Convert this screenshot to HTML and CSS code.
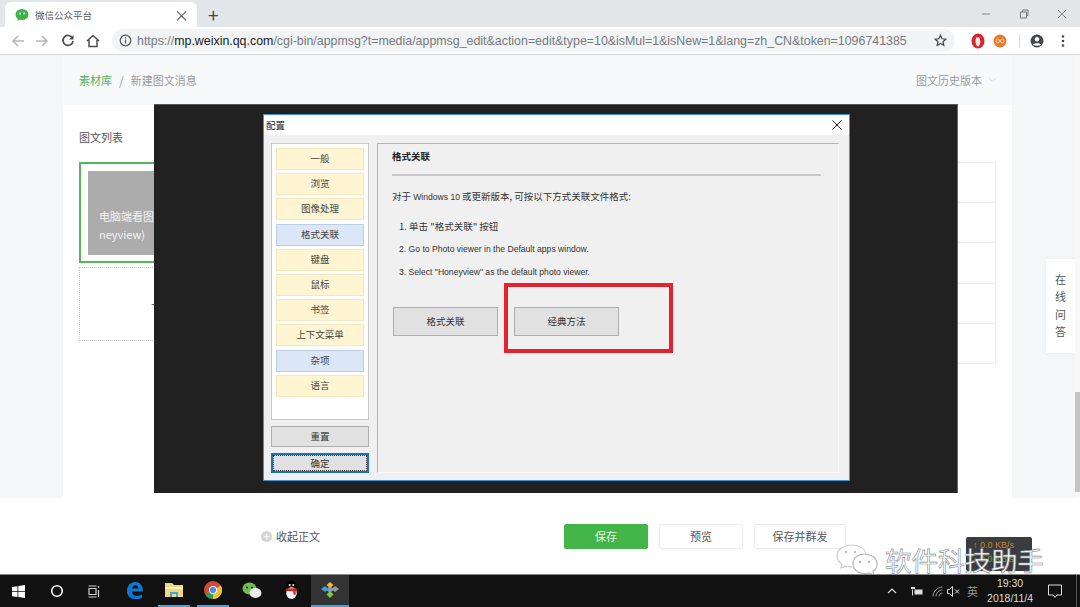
FILE: index.html
```html
<!DOCTYPE html>
<html>
  <head>
    <meta charset="UTF-8">
    <title>微信公众平台</title>
    <link rel="stylesheet" href="styles.css">
  </head>
  <body>
    <div class="tabstrip">
      <div class="tab">
        <svg class="tab-icon" width="14" height="14" viewBox="0 0 14 14"><ellipse cx="7" cy="6.500" rx="6.500" ry="5.600" fill="#3fb24a"/><path d="M3 10l-.5 3 3-2z" fill="#3fb24a"/><circle cx="5" cy="5.500" r="1" fill="#fff"/><circle cx="9" cy="5.500" r="1" fill="#fff"/></svg>
        <span class="tab-title">微信公众平台</span>
        <span class="tab-close">×</span>
      </div>
      <span class="tab-new">+</span>
      <div class="win-btns">
        <svg width="10" height="10" viewBox="0 0 10 10"><path d="M1 5h8" stroke="#888" fill="none"/></svg>
        <svg width="10" height="10" viewBox="0 0 10 10"><path d="M1.500 3h6v6h-6zM3.500 3V1h5.500v5.500H7.500" stroke="#777" fill="none"/></svg>
        <svg width="10" height="10" viewBox="0 0 10 10"><path d="M1 1l8 8M9 1l-8 8" stroke="#888" fill="none"/></svg>
      </div>
    </div>
    <div class="toolbar">
      <svg class="nav nav-back" width="14" height="14" viewBox="0 0 14 14"><path d="M13 7H2M7 2L2 7l5 5" stroke="#b4b7ba" stroke-width="1.500" fill="none"/></svg>
      <svg class="nav nav-forward" width="14" height="14" viewBox="0 0 14 14"><path d="M1 7h11M7 2l5 5-5 5" stroke="#b4b7ba" stroke-width="1.500" fill="none"/></svg>
      <svg class="nav nav-reload" width="14" height="14" viewBox="0 0 14 14"><path d="M11.500 4.200A5 5 0 1 0 12 7" stroke="#4a4d50" stroke-width="1.700" fill="none"/><path d="M12.500 1v4.500H8z" fill="#4a4d50"/></svg>
      <svg class="nav nav-home" width="14" height="14" viewBox="0 0 14 14"><path d="M1 7l6-5.500L13 7M3 6v6.500h8V6" stroke="#4a4d50" stroke-width="1.500" fill="none"/></svg>
      <div class="omnibox">
        <svg width="13" height="13" viewBox="0 0 13 13"><circle cx="6.500" cy="6.500" r="5.300" stroke="#555" stroke-width="1.200" fill="none"/><path d="M6.500 5.500v4M6.500 3.200v1.200" stroke="#555" stroke-width="1.200"/></svg>
        <span class="url"><span class="url-dim">https://</span>mp.weixin.qq.com<span class="url-dim">/cgi-bin/appmsg?t=media/appmsg_edit&amp;action=edit&amp;type=10&amp;isMul=1&amp;isNew=1&amp;lang=zh_CN&amp;token=1096741385</span></span>
        <svg class="star" width="13" height="13" viewBox="0 0 13 13"><path d="M6.500 1.300l1.600 3.500 3.700.4-2.800 2.500.8 3.700-3.300-1.900-3.300 1.900.8-3.700L1.200 5.200l3.700-.4z" stroke="#444" stroke-width="1.200" fill="none"/></svg>
      </div>
      <div class="ext">
        <svg width="14" height="16" viewBox="0 0 14 16"><ellipse cx="7" cy="8" rx="6.500" ry="7.500" fill="#d8262c"/><path d="M4.500 8c0-2 .8-4 1.500-4s.6 1 .8 1 .3-1 1-1 .6 1 .8 1.500.7 1.500.7 3.500-1 4.500-2.300 4.500S4.500 10.500 4.500 8z" fill="#fbeaea"/></svg>
        <svg class="ext-orange" width="14" height="14" viewBox="0 0 14 14"><circle cx="7" cy="7" r="6.500" fill="#f0782a"/><circle cx="4.800" cy="7" r="1.800" fill="none" stroke="#ffd9a8"/><circle cx="9.200" cy="7" r="1.800" fill="none" stroke="#ffd9a8"/></svg>
        <span class="ext-sep"></span>
        <svg class="ext-user" width="14" height="14" viewBox="0 0 14 14"><circle cx="7" cy="7" r="6.500" fill="#46494c"/><circle cx="7" cy="5.300" r="2.200" fill="#fff"/><path d="M2.800 10.800c1-2 7.400-2 8.400 0-1.200 1.200-7.200 1.200-8.400 0z" fill="#fff"/></svg>
        <svg class="ext-more" width="4" height="14" viewBox="0 0 4 14"><circle cx="2" cy="2.500" r="1.300" fill="#46494c"/><circle cx="2" cy="7" r="1.300" fill="#46494c"/><circle cx="2" cy="11.500" r="1.300" fill="#46494c"/></svg>
      </div>
    </div>

    <div class="page">
      <div class="column">
        <div class="crumbs">
          <span class="crumb-link">素材库</span><span class="crumb-sep">/</span><span class="crumb-now">新建图文消息</span>
          <span class="history">图文历史版本
            <svg width="9" height="6" viewBox="0 0 9 6"><path d="M.5 .5l4 4 4-4" stroke="#dfe1e3" fill="none"/></svg>
          </span>
        </div>
        <div class="editor">
          <div class="side">
            <div class="side-title">图文列表</div>
            <div class="article">
              <div class="cover">电脑端看图<br>neyview)</div>
            </div>
            <div class="add-article">+</div>
          </div>
          <div class="form-rows">
            <div class="form-row"></div>
            <div class="form-row"></div>
            <div class="form-row"></div>
            <div class="form-row"></div>
            <div class="form-row"></div>
          </div>
        </div>
      </div>
      <div class="help">在<br>线<br>问<br>答</div>
      <div class="scrollbar"><div class="thumb"></div></div>

      <div class="action-bar">
        <span class="collapse"><span class="collapse-icon">+</span>收起正文</span>
        <span class="btn btn-green">保存</span>
        <span class="btn btn-preview">预览</span>
        <span class="btn btn-send">保存并群发</span>
      </div>

      <div class="speed">↑ 0.0 KB/s<br><span class="speed-down">↓ 0.0 KB/s</span></div>
      <div class="watermark">
        <svg width="44" height="34" viewBox="0 0 44 34"><path d="M17 2C8 2 2 7 2 13c0 3 2 6 5 8l-1 4 5-2c2 .6 4 1 6 .8M17 2c8 0 13 4 14 9" stroke="#c9cdd0" fill="#fff" stroke-width="1.200"/><path d="M29 11c7 0 13 4 13 10 0 3-2 6-4 7l1 4-5-2c-8 2-16-2-16-9 0-6 5-10 11-10z" stroke="#b5b9bc" fill="#fff" stroke-width="1.200"/><circle cx="11" cy="9" r="1" fill="#aaa"/><circle cx="20" cy="9" r="1" fill="#aaa"/><circle cx="25" cy="19" r="1" fill="#999"/><circle cx="34" cy="19" r="1" fill="#999"/></svg>
        <span class="wm-text">软件科技助手</span>
      </div>

      <div class="shot">
        <div class="dialog">
          <div class="dlg-title">
            <span>配置</span>
            <svg width="10" height="10" viewBox="0 0 10 10"><path d="M.5 .5l9 9M9.500 .5l-9 9" stroke="#222" fill="none"/></svg>
          </div>
          <div class="dlg-body">
            <div class="dlg-left">
              <div class="menu">
                <div class="menu-item">一般</div>
                <div class="menu-item">浏览</div>
                <div class="menu-item">图像处理</div>
                <div class="menu-item menu-blue">格式关联</div>
                <div class="menu-item">键盘</div>
                <div class="menu-item">鼠标</div>
                <div class="menu-item">书签</div>
                <div class="menu-item">上下文菜单</div>
                <div class="menu-item menu-blue">杂项</div>
                <div class="menu-item">语言</div>
              </div>
              <div class="dlg-btn side-btn">重置</div>
              <div class="dlg-btn side-btn ok-btn">确定</div>
            </div>
            <div class="panel">
              <div class="panel-title">格式关联</div>
              <div class="panel-rule"></div>
              <p class="panel-intro">对于 <span class="latin">Windows 10</span> 或更新版本, 可按以下方式关联文件格式:</p>
              <p class="step">1. 单击 "格式关联" 按钮</p>
              <p class="step latin">2. Go to Photo viewer in the Default apps window.</p>
              <p class="step latin">3. Select "Honeyview" as the default photo viewer.</p>
              <div class="panel-btns">
                <div class="dlg-btn wide-btn">格式关联</div>
                <div class="dlg-btn wide-btn">经典方法</div>
              </div>
            </div>
          </div>
        </div>
        <div class="red-box"></div>
      </div>
    </div>

    <div class="taskbar">
      <svg class="tb-win" width="13" height="13" viewBox="0 0 13 13"><path d="M0 2l5.500-.8v5H0zM6.300 1.100L13 0v6.200H6.300zM0 7h5.500v5L0 11.200zM6.300 7H13v6l-6.700-1z" fill="#fff"/></svg>
      <svg class="tb-cortana" width="14" height="14" viewBox="0 0 14 14"><circle cx="7" cy="7" r="5.300" stroke="#fff" stroke-width="1.600" fill="none"/></svg>
      <svg class="tb-tasks" width="14" height="13" viewBox="0 0 14 13"><path d="M.5 1h8M.5 12h8M1 3.500h7v6H1zM10.500 1v2M10.500 5v7" stroke="#cfcfcf" fill="none" stroke-width="1.200"/></svg>
      <span class="tb-app">
        <svg width="16" height="17" viewBox="0 0 16 17"><path d="M0 9C0 3.500 3.500 0 8 0s8 3.200 8 9.500H5c0 3 2 4.500 5 4.500 2 0 4-.6 5-1.400V16c-1.500.8-3.500 1.200-5.500 1.200C4 17.200 0 14.500 0 9zM5 6.500h6.300C11.300 4.500 10 3.300 8.300 3.300S5.400 4.500 5 6.500z" fill="#0a78d4"/></svg>
      </span>
      <span class="tb-app tb-on">
        <svg width="18" height="16" viewBox="0 0 18 16"><path d="M0 1h7l2 2h9v12H0z" fill="#f6d67a"/><path d="M0 5h18v2H0z" fill="#fff3c4"/><path d="M5 15v-5h8v5h-2v-3H7v3z" fill="#39a9dc"/></svg>
      </span>
      <span class="tb-app tb-on">
        <svg width="18" height="18" viewBox="0 0 18 18"><circle cx="9" cy="9" r="9" fill="#d9463a"/><path d="M9 9L1.200 13.500A9 9 0 0 0 9 18z" fill="#3a9b4a"/><path d="M9 9l7.800-4.500A9 9 0 0 1 9 18z" fill="#f2c230"/><circle cx="9" cy="9" r="4" fill="#fff"/><circle cx="9" cy="9" r="3.100" fill="#4a8bf0"/></svg>
      </span>
      <span class="tb-app">
        <svg width="20" height="17" viewBox="0 0 20 17"><ellipse cx="7.500" cy="6.500" rx="7" ry="6" fill="#6cc04a"/><ellipse cx="13.500" cy="11" rx="6" ry="5" fill="#eee"/><circle cx="5" cy="5.500" r="1" fill="#1a1a1a"/><circle cx="10" cy="5.500" r="1" fill="#1a1a1a"/></svg>
      </span>
      <span class="tb-app">
        <svg width="15" height="20" viewBox="0 0 14 19"><ellipse cx="7" cy="8" rx="5" ry="7.500" fill="#000"/><ellipse cx="7" cy="12.500" rx="5" ry="5.500" fill="#f4f4f4"/><path d="M2 8h10v2.500H2z" fill="#d6231e"/><path d="M8.500 10h2.500v4H9z" fill="#d6231e"/><circle cx="5.300" cy="4.800" r="1" fill="#eee"/><circle cx="8.700" cy="4.800" r="1" fill="#eee"/><path d="M5.500 6.500h3l-1.500 1.500z" fill="#f0a020"/></svg>
      </span>
      <span class="tb-app tb-active">
        <svg width="20" height="17" viewBox="0 0 20 17"><path d="M10 4l4 3.500L10 11 6 7.500z" fill="#7fa0b0"/><path d="M10 0l3.500 3-3.500 3-3.500-3z" fill="#f0b83c"/><path d="M5 4l3.500 3L5 10 1 7z" fill="#3f9be0"/><path d="M15 4l4 3-4 3-3.500-3z" fill="#9a9a9a"/><path d="M10 9l3.500 3.500L10 16l-3.500-3.500z" fill="#7ec94a"/></svg>
      </span>
      <div class="tray">
        <svg class="tray-up" width="10" height="6" viewBox="0 0 10 6"><path d="M1 5l4-4 4 4" stroke="#ddd" fill="none" stroke-width="1.200"/></svg>
        <svg class="tray-power" width="12" height="10" viewBox="0 0 12 10"><path d="M0 1h4v2H0zM1 3.500h1v6H1zM3.500 3.500h8v5h-8z" fill="#ddd"/></svg>
        <svg class="tray-wifi" width="11" height="11" viewBox="0 0 11 11"><path d="M1 10.500c0-5 4-9 9.500-9.500M4 10.500c0-3.500 3-6.500 6.500-6.500M7 10.500c0-2 1.500-3.500 3.500-3.500" stroke="#999" fill="none"/></svg>
        <svg class="tray-sound" width="13" height="11" viewBox="0 0 13 11"><path d="M.5 3.500h2l3-3v10l-3-3h-2zM8 3.500l4 4M12 3.500l-4 4" stroke="#ddd" fill="none"/></svg>
        <span class="tray-ime">英</span>
        <span class="clock">19:30<br>2018/11/4</span>
        <svg class="tray-note" width="14" height="14" viewBox="0 0 14 14"><path d="M.5 1h13v10H9l-2 2.500L5.500 11H.5z" stroke="#ddd" fill="none"/></svg>
        <span class="show-desktop"></span>
      </div>
    </div>
  </body>
</html>
```

FILE: styles.css
```css
* {
    box-sizing: border-box;
}
html, body {
    margin: 0;
    height: 607px;
    overflow: hidden;
}
body {
    font-family: "Noto Sans CJK SC", "Liberation Sans", sans-serif;
    font-size: 11px;
    display: flex;
    flex-direction: column;
    background: #f5f6f8;
    color: #333;
}
p {
    margin: 0;
}

/* browser chrome */
.tabstrip {
    height: 27px;
    background: #e3e6e9;
    display: flex;
    align-items: flex-end;
    padding-left: 5px;
}
.tab {
    width: 192px;
    height: 25px;
    background: #fff;
    border-radius: 6px 6px 0 0;
    display: flex;
    align-items: center;
    padding: 0 8px 0 10px;
}
.tab-title {
    margin-left: 6px;
    font-size: 9.500px;
    color: #5a5a5a;
    flex: 1;
}
.tab-close {
    font-size: 15px;
    color: #555;
}
.tab-new {
    font-size: 19px;
    line-height: 25px;
    margin-left: 11px;
    color: #444;
}
.win-btns {
    margin-left: auto;
    align-self: center;
    display: flex;
    gap: 28px;
    padding-right: 13px;
}
.toolbar {
    height: 28px;
    background: #fff;
    border-bottom: 1px solid #d3d5d7;
    display: flex;
    align-items: center;
    padding-left: 11px;
}
.nav-back {
    margin-right: 10px;
}
.nav-forward {
    margin-right: 12px;
}
.nav-reload {
    margin-right: 11px;
}
.omnibox {
    width: 843px;
    height: 23px;
    margin-left: 12px;
    background: #f1f3f4;
    border-radius: 12px;
    display: flex;
    align-items: center;
    padding: 0 8px 0 7px;
}
.url {
    margin-left: 5px;
    font-family: "Liberation Sans", sans-serif;
    font-size: 12.400px;
    color: #202124;
    white-space: nowrap;
    flex: 1;
}
.url-dim {
    color: #777b7f;
}
.ext {
    display: flex;
    align-items: center;
    margin-left: 16px;
}
.ext-orange {
    margin-left: 8px;
}
.ext-sep {
    width: 1px;
    height: 14px;
    margin-left: 12px;
    background: #dcdcdc;
}
.ext-user {
    margin-left: 10px;
}
.ext-more {
    margin-left: 17px;
}

/* page behind the screenshot */
.page {
    position: relative;
    flex: 1;
    background: #f5f6f8;
}
.column {
    position: absolute;
    left: 63px;
    top: 0;
    width: 949px;
    height: 100%;
    display: flex;
    flex-direction: column;
    background: #fff;
}
.crumbs {
    height: 50px;
    background: #f8f9fb;
    display: flex;
    align-items: center;
    padding: 0 15px 0 16px;
    font-size: 11px;
    color: #9b9b9b;
}
.crumb-link {
    color: #4db35a;
}
.crumb-sep {
    margin: 0 7px;
    font-size: 12px;
    color: #7fa98a;
}
.history {
    margin-left: auto;
    display: flex;
    align-items: center;
    gap: 6px;
}
.editor {
    flex: 1;
    display: flex;
    padding: 0 16px;
}
.side {
    width: 190px;
}
.side-title {
    margin-top: 23px;
    height: 18px;
    line-height: 18px;
    color: #555;
}
.article {
    height: 101px;
    margin-top: 16px;
    border: 2px solid #57b45f;
    padding: 7px;
}
.cover {
    height: 84px;
    background: #acacac;
    color: #f2f2f2;
    font-size: 11px;
    line-height: 18px;
    padding: 36px 0 0 11px;
}
.add-article {
    height: 74px;
    margin-top: 4px;
    border: 1px dotted #c8c8c8;
    padding: 25px 0 0 71px;
    font-size: 15px;
    color: #666;
}
.form-rows {
    margin: 57px 0 0 auto;
    width: 100px;
    height: 202px;
    border: 1px solid #eceded;
    display: flex;
    flex-direction: column;
}
.form-row {
    flex: 1;
    border-bottom: 1px solid #eceded;
}
.form-row:last-child {
    border-bottom: 0;
}
.help {
    position: absolute;
    left: 1046px;
    top: 204px;
    width: 29px;
    height: 94px;
    padding-top: 12px;
    background: #fff;
    box-shadow: 0 0 4px rgba(0,0,0,0.06);
    text-align: center;
    font-size: 11px;
    line-height: 17.300px;
    color: #555;
}
.scrollbar {
    position: absolute;
    right: 0;
    top: 0;
    width: 5px;
    height: 100%;
    background: #f8f8f8;
}
.thumb {
    height: 100px;
    margin-top: 337px;
    background: #c4c4c4;
}

/* save bar */
.action-bar {
    position: absolute;
    left: 0;
    right: 0;
    bottom: 0;
    height: 76px;
    background: #fff;
    display: flex;
    align-items: center;
    font-size: 11px;
    color: #555;
    padding: 0 0 0 261px;
}
.collapse {
    display: flex;
    align-items: center;
    gap: 4px;
    width: 303px;
}
.collapse-icon {
    width: 11px;
    height: 11px;
    border-radius: 50%;
    background: #d5d5d5;
    color: #fff;
    font-size: 11px;
    line-height: 10px;
    text-align: center;
}
.btn {
    height: 25px;
    line-height: 23px;
    text-align: center;
    border: 1px solid #ececec;
    border-radius: 2px;
}
.btn-green {
    width: 84px;
    background: #43b549;
    border-color: #43b549;
    color: #e8f6e9;
}
.btn-preview {
    width: 84px;
    margin-left: 11px;
}
.btn-send {
    width: 92px;
    margin-left: 11px;
}
.speed {
    position: absolute;
    left: 966px;
    top: 482px;
    width: 66px;
    height: 34px;
    background: #3a3c40;
    border-radius: 2px;
    font-family: "Liberation Sans", sans-serif;
    font-size: 9px;
    line-height: 14px;
    padding: 1px 0 0 7px;
    color: #c98a24;
}
.speed-down {
    color: #6d9c3a;
}
.watermark {
    position: absolute;
    left: 835px;
    top: 488px;
    display: flex;
    align-items: center;
    gap: 6px;
}
.wm-text {
    font-size: 26.500px;
    line-height: 34px;
    color: #fff;
    -webkit-text-stroke: .6px #8a8d90;
}

/* dialog screenshot pasted over the page */
.shot {
    position: absolute;
    left: 154px;
    top: 49px;
    width: 804px;
    height: 389px;
    background: #212121;
    border-top: 1px solid #555;
    border-right: 1px solid #666;
    padding: 9px 0 0 109px;
}
.dialog {
    width: 587px;
    height: 367px;
    background: #fff;
    border: 1px solid #3a93d4;
    display: flex;
    flex-direction: column;
}
.dlg-title {
    height: 20px;
    display: flex;
    align-items: center;
    justify-content: space-between;
    padding: 0 7px 0 2px;
    font-size: 9.500px;
    color: #222;
}
.dlg-body {
    flex: 1;
    background: #f0f0f0;
    display: flex;
    padding: 8px 10px 7px 7px;
}
.dlg-left {
    width: 98px;
    margin-right: 8px;
}
.menu {
    height: 277px;
    background: #fff;
    border: 1px solid #c8c8c8;
    padding: 4px 4px 0;
    margin-bottom: 6px;
    display: flex;
    flex-direction: column;
    gap: 3.200px;
}
.menu-item {
    height: 22px;
    background: #fff5d2;
    border: 1px solid #f4e7bd;
    text-align: center;
    line-height: 19px;
    font-size: 9.500px;
    color: #444;
}
.menu-blue {
    background: #dbe6f6;
    border-color: #bccde6;
}
.dlg-btn {
    background: #e1e1e1;
    border: 1px solid #adadad;
    text-align: center;
    font-size: 9.500px;
    color: #333;
}
.side-btn {
    height: 21px;
    line-height: 19px;
    margin-bottom: 6px;
}
.ok-btn {
    height: 20px;
    margin-bottom: 0;
    border: 2px solid #1c72b8;
    line-height: 16px;
    outline: 1px dotted #333;
    outline-offset: -3px;
}
.panel {
    flex: 1;
    background: #f0f0f0;
    border: 1px solid #f8f8f8;
    border-left-color: #b4b4b4;
    border-top-color: #b4b4b4;
    padding: 5px 0 0 14px;
    font-size: 9.500px;
    color: #333;
}
.panel-title {
    font-weight: 700;
    color: #222;
    line-height: 14px;
}
.panel-rule {
    width: 429px;
    height: 2px;
    margin: 11px 0 13px;
    background: #c8c8c8;
}
.panel-intro {
    line-height: 14px;
    margin-bottom: 15px;
}
.step {
    line-height: 14px;
    margin: 0 0 9px 7px;
}
.latin {
    font-family: "Liberation Sans", sans-serif;
    font-size: 8.600px;
}
.panel-btns {
    display: flex;
    gap: 16px;
    margin: 28px 0 0 1px;
}
.wide-btn {
    width: 105px;
    height: 29px;
    line-height: 27px;
}
.red-box {
    position: absolute;
    left: 350px;
    top: 178px;
    width: 169px;
    height: 70px;
    border: 4px solid #e5212f;
}

/* windows taskbar */
.taskbar {
    height: 33px;
    background: #111;
    border-top: 1px solid #888;
    display: flex;
    align-items: center;
    position: relative;
    z-index: 1;
}
.tb-win {
    margin-left: 12px;
}
.tb-cortana {
    margin-left: 25px;
}
.tb-tasks {
    margin-left: 24px;
}
.tb-app {
    width: 32px;
    height: 32px;
    margin-left: 7px;
    display: flex;
    align-items: center;
    justify-content: center;
    border-bottom: 2px solid transparent;
}
.tb-app:nth-of-type(1) {
    margin-left: 17px;
}
.tb-on {
    border-bottom-color: #4d9fd8;
}
.tb-active {
    width: 38px;
    margin-left: 4px;
    background: #333;
    border-bottom-color: #4d9fd8;
}
.tray {
    margin-left: auto;
    display: flex;
    align-items: center;
    height: 100%;
    color: #ddd;
}
.tray-power {
    margin-left: 14px;
}
.tray-wifi {
    margin-left: 9px;
}
.tray-sound {
    margin-left: 4px;
}
.tray-ime {
    margin-left: 7px;
    font-size: 11px;
    color: #999;
}
.clock {
    margin-left: 9px;
    font-size: 10.500px;
    line-height: 15px;
    text-align: center;
    font-family: "Liberation Sans", sans-serif;
}
.tray-note {
    margin-left: 15px;
}
.show-desktop {
    width: 1px;
    height: 100%;
    margin: 0 3px 0 14px;
    background: #555;
}
```
